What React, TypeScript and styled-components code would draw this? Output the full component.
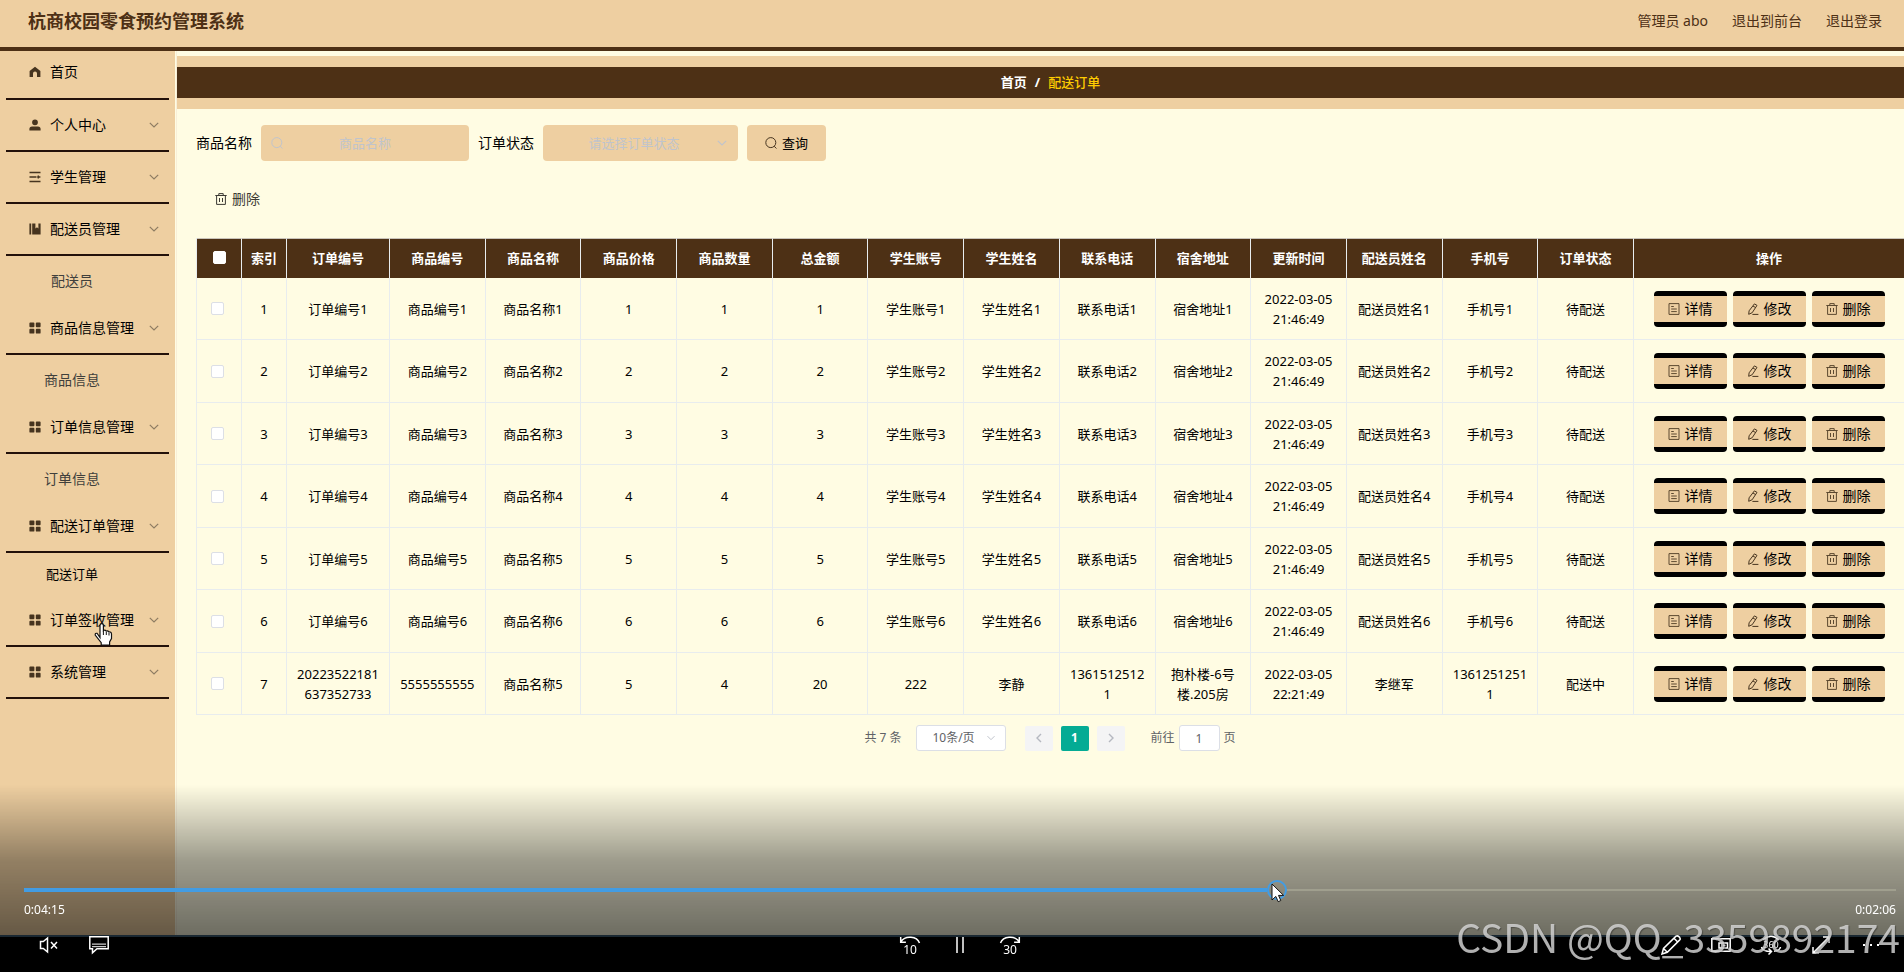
import React from 'react';
import styled, { createGlobalStyle } from 'styled-components';

const tan = '#eecfa1';
const brown = '#4d3015';
const cream = '#fffce3';
const line = '#e8ecee';
const blue = '#429ce3';

const GlobalStyle = createGlobalStyle`
  *, *::before, *::after { box-sizing: border-box; }
  body {
    margin: 0;
    background: ${cream};
    color: #000;
    font: 13px/20px "Noto Sans", "Noto Sans CJK SC", sans-serif;
  }
  button, input, select { font: inherit; color: inherit; margin: 0; }
  a { color: inherit; text-decoration: none; }
`;

const Header = styled.header`
  display: flex;
  align-items: center;
  justify-content: space-between;
  height: 51px;
  padding: 0 22px 6px 28px;
  background: ${tan};
  border-bottom: 4px solid ${brown};
  color: ${brown};
`;

const Title = styled.h1`
  margin: 0;
  font-size: 18px;
  line-height: 24px;
  font-weight: 700;
`;

const UserNav = styled.nav`
  display: flex;
  gap: 24px;
  font-size: 14px;
`;

const Body = styled.div`
  display: flex;
  min-height: calc(100vh - 51px);
`;

const Sidebar = styled.aside`
  flex: none;
  width: 177px;
  padding-right: 1px;
  background: ${tan};
  background-clip: content-box;
  border-right: 1px solid #f8efd8;
  font-size: 14px;
`;

const MenuList = styled.ul`
  list-style: none;
  margin: 0;
  padding: 0;
`;

const MenuItem = styled.li`
  position: relative;
`;

const MenuButton = styled.button<{ $first?: boolean }>`
  display: flex;
  align-items: center;
  gap: 9px;
  width: calc(100% - 12px);
  height: ${(p) => (p.$first ? 49 : 52)}px;
  margin: 0 6px;
  padding: 0 9px ${(p) => (p.$first ? 6 : 0)}px 23px;
  background: none;
  border: 0;
  border-bottom: 2px solid #23110a;
  text-align: left;
  white-space: nowrap;
  cursor: pointer;
`;

const MenuLabel = styled.span`
  flex: 1;
`;

const SubLink = styled.a<{ $active?: boolean }>`
  display: block;
  width: 144px;
  height: ${(p) => (p.$active ? 42 : 47)}px;
  line-height: ${(p) => (p.$active ? 42 : 49)}px;
  font-size: ${(p) => (p.$active ? 13 : 14)}px;
  color: ${(p) => (p.$active ? '#000' : '#40403c')};
  text-align: center;
`;

const HandCursor = styled.svg`
  position: absolute;
  left: 94px;
  top: 28px;
`;

const Main = styled.main`
  flex: 1;
  min-width: 0;
  padding-top: 5px;
`;

const CrumbBand = styled.div`
  padding: 11px 0;
  background: ${tan};
`;

const Crumbs = styled.nav`
  display: flex;
  align-items: center;
  justify-content: center;
  gap: 8px;
  height: 31px;
  padding: 0 0 2px 20px;
  background: ${brown};
  color: #fff;
  font-weight: 700;
`;

const CrumbCurrent = styled.span`
  color: #fc0;
  font-weight: 500;
`;

const Content = styled.div`
  padding: 16px 0 0 19px;
`;

const Filters = styled.form`
  display: flex;
  align-items: center;
`;

const FieldLabel = styled.label`
  width: 65px;
  font-size: 14px;
  white-space: nowrap;
`;

const Field = styled.div<{ $width: number }>`
  position: relative;
  width: ${(p) => p.$width}px;
  margin-right: 9px;
  color: #c0c4cc;
`;

const SearchInput = styled.input`
  display: block;
  width: 100%;
  height: 36px;
  padding: 0 30px;
  border: 0;
  border-radius: 4px;
  background: ${tan};
  text-align: center;
  &::placeholder { color: #c0c4cc; opacity: 1; }
`;

const StatusSelect = styled.select`
  display: block;
  width: 100%;
  height: 36px;
  padding: 0 28px 0 15px;
  border: 0;
  border-radius: 4px;
  background: ${tan};
  appearance: none;
  text-align: center;
  text-align-last: center;
`;

const FieldIcon = styled.span<{ $side: 'left' | 'right' }>`
  position: absolute;
  top: 0;
  ${(p) => p.$side}: 10px;
  display: flex;
  align-items: center;
  height: 100%;
  pointer-events: none;
`;

const QueryButton = styled.button`
  display: flex;
  align-items: center;
  justify-content: center;
  gap: 5px;
  width: 79px;
  height: 36px;
  padding: 0;
  border: 0;
  border-radius: 4px;
  background: ${tan};
`;

const DeleteButton = styled.button`
  display: flex;
  align-items: center;
  gap: 5px;
  height: 36px;
  margin: 20px 0 21px;
  padding: 0 19px;
  border: 0;
  background: none;
  color: #3c3a34;
  font-size: 14px;
`;

const Table = styled.table`
  width: 100%;
  table-layout: fixed;
  border-collapse: separate;
  border-spacing: 0;
  border-left: 1px solid ${line};
  text-align: center;
`;

const Col = styled.col<{ $w?: number }>`
  width: ${(p) => (p.$w ? p.$w + 'px' : 'auto')};
`;

const HeadCell = styled.th`
  height: 40px;
  padding: 0 0 2px;
  background: ${brown};
  border-right: 1px solid ${line};
  border-top: 1px solid #c9c3ba;
  color: #fff;
  font-weight: 700;
  &:last-child { border-right: 0; }
`;

const Row = styled.tr`
  height: 62px;
  &:nth-child(even) { height: 63px; }
`;

const Cell = styled.td`
  padding: 0 10px;
  border-right: 1px solid ${line};
  border-bottom: 1px solid ${line};
  word-break: break-all;
  &:last-child { border-right: 0; }
`;

const Check = styled.input<{ $head?: boolean }>`
  display: block;
  width: 13px;
  height: 13px;
  margin: 0 auto;
  appearance: none;
  border: 1px solid ${(p) => (p.$head ? '#fff' : '#dcdfe6')};
  border-radius: 2px;
  background: #fff;
`;

const CheckCell = styled(Cell)`
  padding: 0 12px 0 8px;
`;

const Actions = styled.div`
  display: flex;
  justify-content: center;
  gap: 6px;
`;

const ActionButton = styled.button`
  display: flex;
  align-items: center;
  justify-content: center;
  gap: 5px;
  width: 73px;
  height: 36px;
  padding: 0;
  border: solid #000;
  border-width: 5px 0;
  border-radius: 4px;
  background: ${tan};
  font-size: 14px;
  white-space: nowrap;
`;

const Pager = styled.nav`
  display: flex;
  align-items: center;
  justify-content: center;
  height: 26px;
  margin-top: 10px;
  color: #606266;
  font-size: 12px;
`;

const SizeField = styled(Field)`
  margin: 0 19px 0 14px;
`;

const SizeSelect = styled.select`
  display: block;
  width: 100%;
  height: 26px;
  padding: 0 24px 0 10px;
  border: 1px solid #dcdfe6;
  border-radius: 3px;
  background: #fff;
  color: #606266;
  appearance: none;
  text-align: center;
  text-align-last: center;
`;

const PageButton = styled.button<{ $active?: boolean }>`
  display: flex;
  align-items: center;
  justify-content: center;
  width: 28px;
  height: 25px;
  margin-right: 8px;
  padding: 0;
  border: 0;
  border-radius: 2px;
  background: ${(p) => (p.$active ? '#04ab94' : '#f4f4f5')};
  color: ${(p) => (p.$active ? '#fff' : '#b5b8c0')};
  font-weight: 700;
`;

const JumpLabel = styled.label`
  display: flex;
  align-items: center;
  gap: 4px;
  margin-left: 18px;
`;

const JumpInput = styled.input`
  width: 41px;
  height: 26px;
  padding: 0;
  border: 1px solid #dcdfe6;
  border-radius: 3px;
  background: #fff;
  text-align: center;
`;

const Player = styled.section`
  position: fixed;
  left: 0;
  right: 0;
  bottom: 0;
  padding: 95px 8px 9px 24px;
  color: #fff;
  background: linear-gradient(
    rgba(0, 0, 0, 0) 0,
    rgba(0, 0, 0, 0.38) 75px,
    rgba(0, 0, 0, 0.57) 150px,
    #1a2832 150px,
    #1a2832 152px,
    #000 152px
  );
`;

const SeekWrap = styled.div`
  position: relative;
  height: 20px;
`;

const Seek = styled.input`
  display: block;
  width: 100%;
  height: 20px;
  appearance: none;
  background:
    linear-gradient(${blue}, ${blue}) left center / 66.4% 4px no-repeat,
    linear-gradient(#a09f8e, #a09f8e) right center / 32.6% 2px no-repeat;
  &::-webkit-slider-thumb {
    appearance: none;
    width: 20px;
    height: 20px;
    border: 2px solid ${blue};
    border-radius: 50%;
    background: transparent;
  }
`;

const ArrowCursor = styled.svg`
  position: absolute;
  left: 66.6%;
  top: 3px;
`;

const Times = styled.div`
  display: flex;
  justify-content: space-between;
  margin-top: 2px;
  font-size: 12px;
  line-height: 16px;
`;

const Controls = styled.div`
  display: grid;
  grid-template-columns: 1fr auto 1fr;
  margin-top: 9px;
`;

const ControlGroup = styled.div<{ $end?: boolean }>`
  display: flex;
  justify-content: ${(p) => (p.$end ? 'flex-end' : 'flex-start')};
`;

const ControlButton = styled.button`
  display: flex;
  align-items: center;
  justify-content: center;
  width: 50px;
  height: 36px;
  padding: 0;
  border: 0;
  background: none;
`;

const Watermark = styled.div`
  position: fixed;
  right: 4px;
  bottom: 8px;
  color: rgba(215, 215, 215, 0.82);
  font: 400 39px/56px "Noto Sans CJK SC", sans-serif;
  text-shadow: 1px 1px 1px rgba(0, 0, 0, 0.3);
  white-space: nowrap;
  pointer-events: none;
`;

type IconName =
  | 'home' | 'user' | 'operation' | 'book' | 'grid'
  | 'search' | 'trash' | 'detail' | 'edit' | 'down' | 'left' | 'right';

const shapes: Record<IconName, React.ReactNode> = {
  home: <path d="M6 .8 11.4 5v6H8V7.4a2 2 0 0 0-4 0V11H.6V5z" fill="currentColor" />,
  user: <path d="M6 .4a2.9 2.9 0 1 1 0 5.8A2.9 2.9 0 0 1 6 .4M.4 11.5V10q0-2.6 2.6-2.6h6q2.6 0 2.6 2.6v1.5z" fill="currentColor" />,
  operation: <path d="M.5 1.5h11M.5 6h7M.5 10.5h11M9.3 4.4v3.2M8.2 6h3.2" stroke="currentColor" strokeWidth="1.4" fill="none" />,
  book: <path d="M.4.5h1.8v11H.4zM3.2.5h3.2v5L8 4.2l1.4 1.3v-5h2.2v11H3.2z" fill="currentColor" />,
  grid: <path d="M1.3.4h3.2q.9 0 .9.9v3q0 .9-.9.9H1.3q-.9 0-.9-.9v-3q0-.9.9-.9M7.7.4h3q.9 0 .9.9v3q0 .9-.9.9h-3q-.9 0-.9-.9v-3q0-.9.9-.9M1.3 6.8h3.2q.9 0 .9.9v3q0 .9-.9.9H1.3q-.9 0-.9-.9v-3q0-.9.9-.9M7.7 6.8h3q.9 0 .9.9v3q0 .9-.9.9h-3q-.9 0-.9-.9v-3q0-.9.9-.9" fill="currentColor" />,
  search: (
    <g fill="none" stroke="currentColor">
      <circle cx="5.8" cy="5.6" r="5" />
      <path d="m9.2 9.2 2.2 2.3" />
    </g>
  ),
  trash: <path d="M.3 2.5h11.4M3.8 2.3V.6h4.4v1.7M1.6 2.7v8.7h8.8V2.7M4.5 5v4M7.5 5v4" stroke="currentColor" fill="none" />,
  detail: <path d="M1 .6h10v10.8H1zM3.2 3.5h2.6M3.2 6h5.6M3.2 8.6h5.6" stroke="currentColor" fill="none" />,
  edit: <path d="M7.4.9 10 2.4 5.2 9.7 1.7 11.3l.4-3.5zM6 3l2.6 1.6M5.4 11.4h6" stroke="currentColor" fill="none" />,
  down: <path d="M1.8 3.8 6 8l4.2-4.2" stroke="currentColor" strokeWidth="1.2" fill="none" />,
  left: <path d="M8 2 4 6l4 4" stroke="currentColor" strokeWidth="1.4" fill="none" />,
  right: <path d="m4 2 4 4-4 4" stroke="currentColor" strokeWidth="1.4" fill="none" />,
};

const IconSvg = styled.svg<{ $color?: string }>`
  flex: none;
  color: ${(p) => p.$color ?? 'inherit'};
`;

function Icon({ name, size = 12, color }: { name: IconName; size?: number; color?: string }) {
  return (
    <IconSvg width={size} height={size} viewBox="0 0 12 12" $color={color} aria-hidden="true">
      {shapes[name]}
    </IconSvg>
  );
}

interface MenuEntry {
  label: string;
  icon: IconName;
  child?: string;
  active?: boolean;
  hovered?: boolean;
}

const menu: MenuEntry[] = [
  { label: '首页', icon: 'home' },
  { label: '个人中心', icon: 'user' },
  { label: '学生管理', icon: 'operation' },
  { label: '配送员管理', icon: 'book', child: '配送员' },
  { label: '商品信息管理', icon: 'grid', child: '商品信息' },
  { label: '订单信息管理', icon: 'grid', child: '订单信息' },
  { label: '配送订单管理', icon: 'grid', child: '配送订单', active: true },
  { label: '订单签收管理', icon: 'grid', hovered: true },
  { label: '系统管理', icon: 'grid' },
];

const columns = [
  '索引', '订单编号', '商品编号', '商品名称', '商品价格', '商品数量', '总金额', '学生账号',
  '学生姓名', '联系电话', '宿舍地址', '更新时间', '配送员姓名', '手机号', '订单状态', '操作',
];

const rows: string[][] = [
  ...[1, 2, 3, 4, 5, 6].map((n) => [
    `${n}`, `订单编号${n}`, `商品编号${n}`, `商品名称${n}`, `${n}`, `${n}`, `${n}`, `学生账号${n}`,
    `学生姓名${n}`, `联系电话${n}`, `宿舍地址${n}`, '2022-03-05 21:46:49', `配送员姓名${n}`, `手机号${n}`, '待配送',
  ]),
  [
    '7', '20223522181637352733', '5555555555', '商品名称5', '5', '4', '20', '222',
    '李静', '13615125121', '抱朴楼-6号楼.205房', '2022-03-05 22:21:49', '李继军', '13612512511', '配送中',
  ],
];

const strokes = { fill: 'none', stroke: '#fff', strokeWidth: 1.5 } as const;

function Skip({ seconds, forward }: { seconds: number; forward?: boolean }) {
  return (
    <svg width="22" height="22" viewBox="0 0 22 22" aria-hidden="true">
      <path
        d={forward ? 'M1.5 9a10 8 0 0 1 18.5-1.5M20.3 3v5.2h-5.2' : 'M20.5 9A10 8 0 0 0 2 7.5M1.7 3v5.2h5.2'}
        {...strokes}
      />
      <text x="11" y="20" fontSize="12" fill="#fff" textAnchor="middle">{seconds}</text>
    </svg>
  );
}

export default function App() {
  return (
    <>
      <GlobalStyle />
      <Header>
        <Title>杭商校园零食预约管理系统</Title>
        <UserNav>
          <span>管理员 abo</span>
          <a href="#front">退出到前台</a>
          <a href="#logout">退出登录</a>
        </UserNav>
      </Header>
      <Body>
        <Sidebar>
          <MenuList>
            {menu.map((m, i) => (
              <MenuItem key={m.label}>
                <MenuButton type="button" $first={i === 0}>
                  <Icon name={m.icon} color="#46341f" />
                  <MenuLabel>{m.label}</MenuLabel>
                  {i > 0 && <Icon name="down" color="#8d7c62" />}
                </MenuButton>
                {m.child && <SubLink href="#list" $active={m.active}>{m.child}</SubLink>}
                {m.hovered && (
                  <HandCursor width="19" height="23" viewBox="0 0 19 23" aria-hidden="true">
                    <path
                      d="M6 14.5V2.4a1.7 1.7 0 0 1 3.4 0v5.2q1.6-1 2.8.5 1.8-.6 2.6.9 2.4-.5 2.7 2v4.5L15.6 19v3H7.2v-2.3L1.2 12q-.2-2.2 2-1.6z"
                      fill="#fff" stroke="#111" strokeWidth="1.2"
                    />
                    <path d="M9.4 8v4M12.3 9v3M15 10v2.5" stroke="#111" />
                  </HandCursor>
                )}
              </MenuItem>
            ))}
          </MenuList>
        </Sidebar>
        <Main>
          <CrumbBand>
            <Crumbs>
              <a href="#home">首页</a>
              <span>/</span>
              <CrumbCurrent>配送订单</CrumbCurrent>
            </Crumbs>
          </CrumbBand>
          <Content>
            <Filters onSubmit={(e) => e.preventDefault()}>
              <FieldLabel htmlFor="goods">商品名称</FieldLabel>
              <Field $width={208}>
                <SearchInput id="goods" placeholder="商品名称" />
                <FieldIcon $side="left"><Icon name="search" /></FieldIcon>
              </Field>
              <FieldLabel htmlFor="status">订单状态</FieldLabel>
              <Field $width={195}>
                <StatusSelect id="status">
                  <option>请选择订单状态</option>
                  <option>待配送</option>
                  <option>配送中</option>
                </StatusSelect>
                <FieldIcon $side="right"><Icon name="down" /></FieldIcon>
              </Field>
              <QueryButton type="submit"><Icon name="search" color="#46341f" />查询</QueryButton>
            </Filters>
            <DeleteButton type="button"><Icon name="trash" />删除</DeleteButton>
            <Table>
              <colgroup>
                <Col $w={45} />
                <Col $w={45} />
                <Col $w={103} />
                {columns.slice(2, -1).map((c) => <Col key={c} />)}
                <Col $w={270} />
              </colgroup>
              <thead>
                <tr>
                  <HeadCell><Check type="checkbox" aria-label="全选" $head /></HeadCell>
                  {columns.map((c) => <HeadCell key={c}>{c}</HeadCell>)}
                </tr>
              </thead>
              <tbody>
                {rows.map((r) => (
                  <Row key={r[0]}>
                    <CheckCell><Check type="checkbox" aria-label={`选择第${r[0]}行`} /></CheckCell>
                    {r.map((v, i) => <Cell key={i}>{v}</Cell>)}
                    <Cell>
                      <Actions>
                        <ActionButton type="button"><Icon name="detail" color="#5c4930" />详情</ActionButton>
                        <ActionButton type="button"><Icon name="edit" color="#46341f" />修改</ActionButton>
                        <ActionButton type="button"><Icon name="trash" color="#5c4930" />删除</ActionButton>
                      </Actions>
                    </Cell>
                  </Row>
                ))}
              </tbody>
            </Table>
            <Pager>
              <span>共 7 条</span>
              <SizeField $width={90}>
                <SizeSelect aria-label="每页条数">
                  <option>10条/页</option>
                  <option>20条/页</option>
                </SizeSelect>
                <FieldIcon $side="right"><Icon name="down" size={10} /></FieldIcon>
              </SizeField>
              <PageButton type="button" aria-label="上一页"><Icon name="left" /></PageButton>
              <PageButton type="button" $active>1</PageButton>
              <PageButton type="button" aria-label="下一页"><Icon name="right" /></PageButton>
              <JumpLabel>
                前往
                <JumpInput defaultValue="1" />
                页
              </JumpLabel>
            </Pager>
          </Content>
        </Main>
      </Body>

      <Player>
        <SeekWrap>
          <Seek type="range" aria-label="播放进度" min={0} max={380} defaultValue={255} />
          <ArrowCursor width="14" height="20" viewBox="0 0 14 20" aria-hidden="true">
            <path d="M1 1v16l3.8-3.6 2.4 5.3 2.6-1.2-2.3-5.1h5.1z" fill="#fff" stroke="#111" />
          </ArrowCursor>
        </SeekWrap>
        <Times>
          <span>0:04:15</span>
          <span>0:02:06</span>
        </Times>
        <Controls>
          <ControlGroup>
            <ControlButton type="button" aria-label="静音">
              <svg width="20" height="18" viewBox="0 0 20 18">
                <path d="M1.5 5.5h2.8L8.5 2v14l-4.2-3.5H1.5zM12 6l6 6.5M18 6l-6 6.5" {...strokes} />
              </svg>
            </ControlButton>
            <ControlButton type="button" aria-label="字幕">
              <svg width="20" height="20" viewBox="0 0 20 20">
                <path d="M.8 1.8h18.4v12H8l-4.5 4v-4H.8z" {...strokes} />
                <path d="M3 9.2h14M3 11.6h14" stroke="#ccc" strokeWidth="1.3" />
              </svg>
            </ControlButton>
          </ControlGroup>
          <ControlGroup>
            <ControlButton type="button" aria-label="后退10秒"><Skip seconds={10} /></ControlButton>
            <ControlButton type="button" aria-label="暂停">
              <svg width="10" height="18" viewBox="0 0 10 18">
                <path d="M2 1v16M8 1v16" {...strokes} />
              </svg>
            </ControlButton>
            <ControlButton type="button" aria-label="前进30秒"><Skip seconds={30} forward /></ControlButton>
          </ControlGroup>
          <ControlGroup $end>
            <ControlButton type="button" aria-label="编辑">
              <svg width="20" height="20" viewBox="0 0 20 20">
                <path d="M1 19l1.5-5.5L15 1.2q2-1 3.5 1t0 3L6.3 17.3zM2.5 13.5l3.8 3.8M13 3.3 16.7 7" {...strokes} />
              </svg>
            </ControlButton>
            <ControlButton type="button" aria-label="画中画">
              <svg width="20" height="14" viewBox="0 0 20 14">
                <path d="M.8.8h18.4v12.4H.8zM8 5h8.5v5H8zM12 7.5h2.5" {...strokes} />
              </svg>
            </ControlButton>
            <ControlButton type="button" aria-label="360度视图">
              <svg width="22" height="22" viewBox="0 0 22 22">
                <path d="M3 6Q11-1.5 19 6M1.5 13q1 4.5 9.5 4.5M8.5 14.5l3 3-3 3M14 17.3q6-.8 6.5-4.3" {...strokes} />
                <text x="11" y="13.5" fontSize="9" fill="#fff" textAnchor="middle">360</text>
              </svg>
            </ControlButton>
            <ControlButton type="button" aria-label="全屏">
              <svg width="18" height="18" viewBox="0 0 18 18">
                <path d="M1 17 17 1M11 1h6v6M1 11v6h6" {...strokes} />
              </svg>
            </ControlButton>
            <ControlButton type="button" aria-label="更多">
              <svg width="18" height="4" viewBox="0 0 18 4">
                <path d="M1 1h2v2H1zM8 1h2v2H8zM15 1h2v2h-2z" fill="#fff" />
              </svg>
            </ControlButton>
          </ControlGroup>
        </Controls>
      </Player>
      <Watermark>CSDN @QQ_3359892174</Watermark>
    </>
  );
}
